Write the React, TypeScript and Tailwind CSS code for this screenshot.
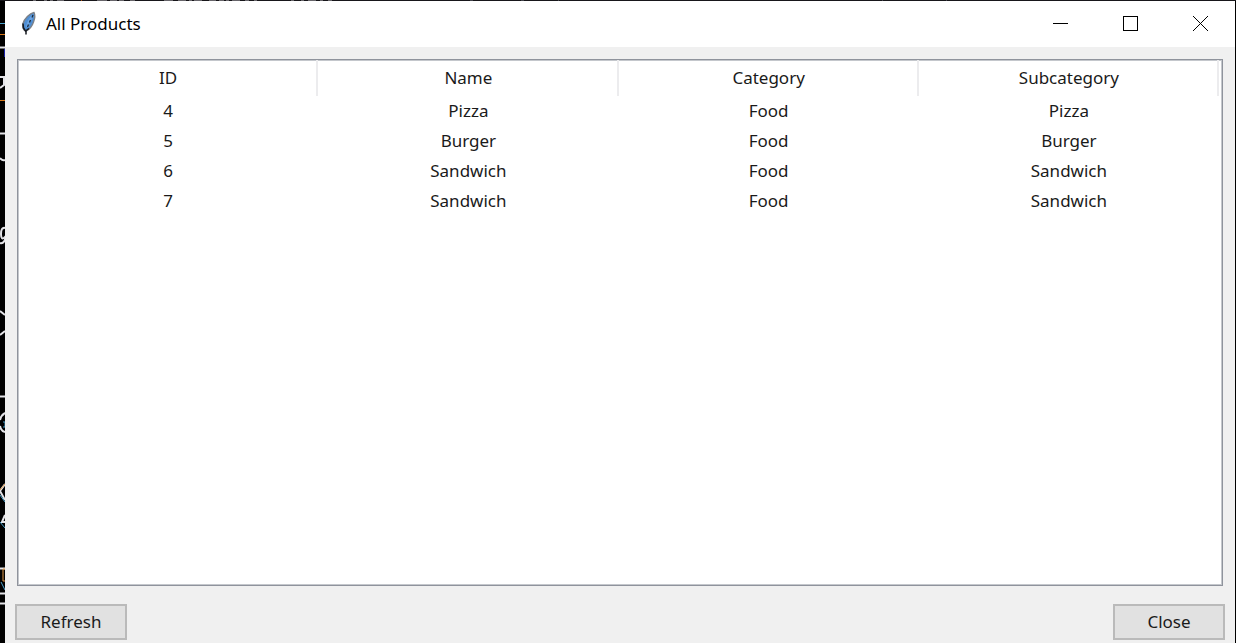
import React from "react";

const columns = ["ID", "Name", "Category", "Subcategory"];

const products = [
  { id: 4, name: "Pizza", category: "Food", subcategory: "Pizza" },
  { id: 5, name: "Burger", category: "Food", subcategory: "Burger" },
  { id: 6, name: "Sandwich", category: "Food", subcategory: "Sandwich" },
  { id: 7, name: "Sandwich", category: "Food", subcategory: "Sandwich" },
];

function FeatherIcon() {
  return (
    <svg width="16" height="26" viewBox="0 0 16 26" aria-hidden="true">
      <path d="M13 1.500C8.500 2.500 3.500 7.500 2 12.500C1.200 16 2 18 3.500 19.500L5 20C8.500 18.500 11 15.500 12.500 11C14 7 14.300 4 13 1.500Z" fill="#4f8fd4" stroke="#7c8188" strokeWidth="1.400" />
      <path d="M11.500 5C9 8 7 12 6 16" stroke="#6ba4e2" strokeWidth="2.500" fill="none" />
      <path d="M12 4L11 6.500M9.500 9L8.500 11.500M7.500 13.500L6.500 16" stroke="#1b2b3e" strokeWidth="1.300" fill="none" />
      <path d="M2 12.500L2.500 17L4.500 20L8 17.500M5 19V23.500" stroke="#15191f" strokeWidth="1.500" fill="none" />
    </svg>
  );
}

function TopEdge() {
  return (
    <svg className="block h-px w-full bg-[#17161a]" aria-hidden="true">
      <path
        d="M33 .5h3M44 .5h3M50 .5h3M57 .5h7M97 .5h10M110 .5h7M119 .5h5M130 .5h5M164 .5h9M178 .5h8M189 .5h3M194 .5h8M209 .5h7M219 .5h5M226 .5h3M232 .5h8M245 .5h4M254 .5h3M291 .5h3M301 .5h3M308 .5h8M320 .5h3M328 .5h4"
        stroke="#67656a"
      />
      <path d="M81 .5h1" stroke="#a65319" />
      <path d="M470 .5h3M521 .5h3M558 .5h1M882 .5h1M946 .5h1" stroke="#42434b" />
    </svg>
  );
}

function LeftEdge() {
  return (
    <svg className="w-[5px] shrink-0" aria-hidden="true">
      <g fill="none" stroke="#e4e4e8" strokeWidth="2">
        <path d="M0 46.500H5M0 76H4V84L0 87M0 132.500H5M0 157Q2 160 5 159" />
        <path d="M5 227Q1 226 1 233T5 236V239Q3 243 0 242M0 310L5 314M0 334L5 330M0 395.500H5" />
        <path d="M5 412Q1 414 0 419M0 425Q1 430 5 431M5 483L0 490L5 499M5 514L2 521H5M0 567.500H5M0 592.500H5M0 602.500H5" />
      </g>
      <path d="M0 22.500H5M0 494L5 501M0 521L5 527M1 581L5 589" stroke="#4ba1c9" fill="none" />
      <path d="M0 33.500H5M0 99.500H5" stroke="#d67617" fill="none" />
      <path d="M4.500 48V56" stroke="#1c22a8" />
      <path d="M0 489L5 483M5 568H3V580H5" stroke="#e29a49" fill="none" />
      <path d="M3 421H5V426H3" stroke="#4ba1c9" fill="none" />
    </svg>
  );
}

function CaptionButton({ label, children }: { label: string; children: React.ReactNode }) {
  return (
    <button type="button" aria-label={label} className="flex h-full w-[70px] items-center justify-center hover:bg-gray-200">
      <svg width="15" height="15" viewBox="0 0 15 15" fill="none" stroke="#000" shapeRendering="crispEdges" aria-hidden="true">
        {children}
      </svg>
    </button>
  );
}

function TitleBar() {
  return (
    <header className="flex h-[46px] shrink-0 items-center bg-white pl-4">
      <FeatherIcon />
      <h1 className="ml-[9px] flex-1 text-[17px] leading-6 text-black">All Products</h1>
      <div className="flex h-11 self-start">
        <CaptionButton label="Minimize">
          <path d="M0 7.500H15" />
        </CaptionButton>
        <CaptionButton label="Maximize">
          <path d="M.5 .5H14.500V14.500H.5Z" />
        </CaptionButton>
        <CaptionButton label="Close window">
          <path d="M0 0L15 15M15 0L0 15" shapeRendering="auto" />
        </CaptionButton>
      </div>
    </header>
  );
}

function ActionButton({ children }: { children: React.ReactNode }) {
  return (
    <button type="button" className="flex h-9 w-28 items-center justify-center border-2 border-[#bababa] bg-[#e1e1e1] text-[17px] leading-6 hover:bg-[#e5f1fb]">
      {children}
    </button>
  );
}

export default function App() {
  return (
    <div className="flex min-h-screen flex-col bg-black font-['Noto_Sans','Open_Sans',sans-serif] text-[#1a1a1a]">
      <TopEdge />
      <div className="flex flex-1 pr-px">
        <LeftEdge />
        <div className="flex min-w-0 flex-1 flex-col bg-[#f0f0f0]">
          <TitleBar />
          <main className="flex flex-1 flex-col px-[10px] pt-3 pb-[3px]">
            <div className="mx-0.5 flex-1 border border-[#8f939c] bg-white pr-[3px] ring-1 ring-[#c4c7cc] ring-inset">
              <table className="w-full table-fixed border-separate border-spacing-0 text-center text-[17px] leading-[30px]">
                <thead>
                  <tr className="h-9">
                    {columns.map((column) => (
                      <th key={column} scope="col" className="border-r-2 border-[#ececee] p-0 pl-0.5 font-normal">
                        {column}
                      </th>
                    ))}
                  </tr>
                </thead>
                <tbody>
                  {products.map((product) => (
                    <tr key={product.id} className="h-[30px]">
                      <td className="p-0">{product.id}</td>
                      <td className="p-0">{product.name}</td>
                      <td className="p-0">{product.category}</td>
                      <td className="p-0">{product.subcategory}</td>
                    </tr>
                  ))}
                </tbody>
              </table>
            </div>
            <div className="mt-[18px] flex justify-between">
              <ActionButton>Refresh</ActionButton>
              <ActionButton>Close</ActionButton>
            </div>
          </main>
        </div>
      </div>
    </div>
  );
}
